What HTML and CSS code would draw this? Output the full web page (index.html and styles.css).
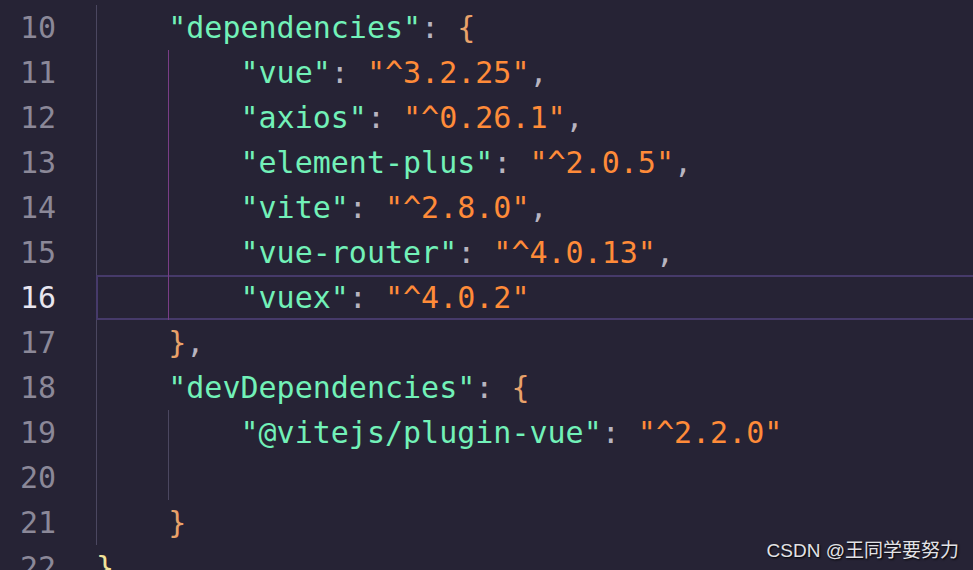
FILE: index.html
```html
<!DOCTYPE html>
<html lang="zh">
<head>
<meta charset="utf-8">
<title>package.json</title>
<link rel="stylesheet" href="styles.css">
</head>
<body>
<div class="editor">
  <div class="line"><span class="num">10</span><span class="code"><span class="ind g"></span><span class="k">"dependencies"</span><span class="p">: </span><span class="b">{</span></span></div>
  <div class="line"><span class="num">11</span><span class="code"><span class="ind g"></span><span class="ind a"></span><span class="k">"vue"</span><span class="p">: </span><span class="s">"^3.2.25"</span><span class="p">,</span></span></div>
  <div class="line"><span class="num">12</span><span class="code"><span class="ind g"></span><span class="ind a"></span><span class="k">"axios"</span><span class="p">: </span><span class="s">"^0.26.1"</span><span class="p">,</span></span></div>
  <div class="line"><span class="num">13</span><span class="code"><span class="ind g"></span><span class="ind a"></span><span class="k">"element-plus"</span><span class="p">: </span><span class="s">"^2.0.5"</span><span class="p">,</span></span></div>
  <div class="line"><span class="num">14</span><span class="code"><span class="ind g"></span><span class="ind a"></span><span class="k">"vite"</span><span class="p">: </span><span class="s">"^2.8.0"</span><span class="p">,</span></span></div>
  <div class="line"><span class="num">15</span><span class="code"><span class="ind g"></span><span class="ind a"></span><span class="k">"vue-router"</span><span class="p">: </span><span class="s">"^4.0.13"</span><span class="p">,</span></span></div>
  <div class="line current"><span class="num">16</span><span class="code"><span class="ind g"></span><span class="ind a"></span><span class="k">"vuex"</span><span class="p">: </span><span class="s">"^4.0.2"</span></span></div>
  <div class="line"><span class="num">17</span><span class="code"><span class="ind g"></span><span class="b">}</span><span class="p">,</span></span></div>
  <div class="line"><span class="num">18</span><span class="code"><span class="ind g"></span><span class="k">"devDependencies"</span><span class="p">: </span><span class="b">{</span></span></div>
  <div class="line"><span class="num">19</span><span class="code"><span class="ind g"></span><span class="ind g"></span><span class="k">"@vitejs/plugin-vue"</span><span class="p">: </span><span class="s">"^2.2.0"</span></span></div>
  <div class="line"><span class="num">20</span><span class="code"><span class="ind g"></span><span class="ind g"></span></span></div>
  <div class="line"><span class="num">21</span><span class="code"><span class="ind g"></span><span class="b">}</span></span></div>
  <div class="line"><span class="num">22</span><span class="code"><span class="b2">}</span></span></div>
</div>
<div class="watermark">CSDN @王同学要努力</div>
</body>
</html>
```

FILE: styles.css
```css
html, body {
  margin: 0;
  padding: 0;
  background: #262335;
  overflow: hidden;
  height: 570px;
}

.editor {
  padding-top: 5px;
  font-family: "DejaVu Sans Mono", "Liberation Mono", monospace;
  font-size: 30px;
}

.line {
  display: flex;
  height: 45px;
  line-height: 46px;
  white-space: pre;
}

.num {
  width: 56px;
  text-align: right;
  color: #8b8898;
  flex: none;
  margin-right: 40px;
}

.current .num {
  color: #e8e6ef;
}

.code {
  flex: 1;
  display: flex;
  align-items: stretch;
  min-width: 0;
}

.current .code {
  box-shadow: inset 0 2px 0 #463a6a, inset 0 -2px 0 #463a6a, inset 2px 0 0 #463a6a;
}

.ind {
  width: 4ch;
  flex: none;
  box-sizing: border-box;
  border-left: 1px solid transparent;
}

.ind.g {
  border-left-color: #4b4760;
}

.ind.a {
  border-left-color: #7a3d86;
}

.current .ind.g {
  border-left-color: transparent;
}

.k { color: #72f1b8; }
.s { color: #ff8b39; }
.p { color: #b8b4c0; }
.b { color: #e9a26a; }
.b2 { color: #f2e39a; }

.watermark {
  position: absolute;
  right: 14px;
  bottom: 8px;
  font-family: "Liberation Sans", "Noto Sans CJK SC", sans-serif;
  font-size: 19px;
  color: #e2e2e6;
  text-shadow: 1px 1px 2px #000;
}
```
